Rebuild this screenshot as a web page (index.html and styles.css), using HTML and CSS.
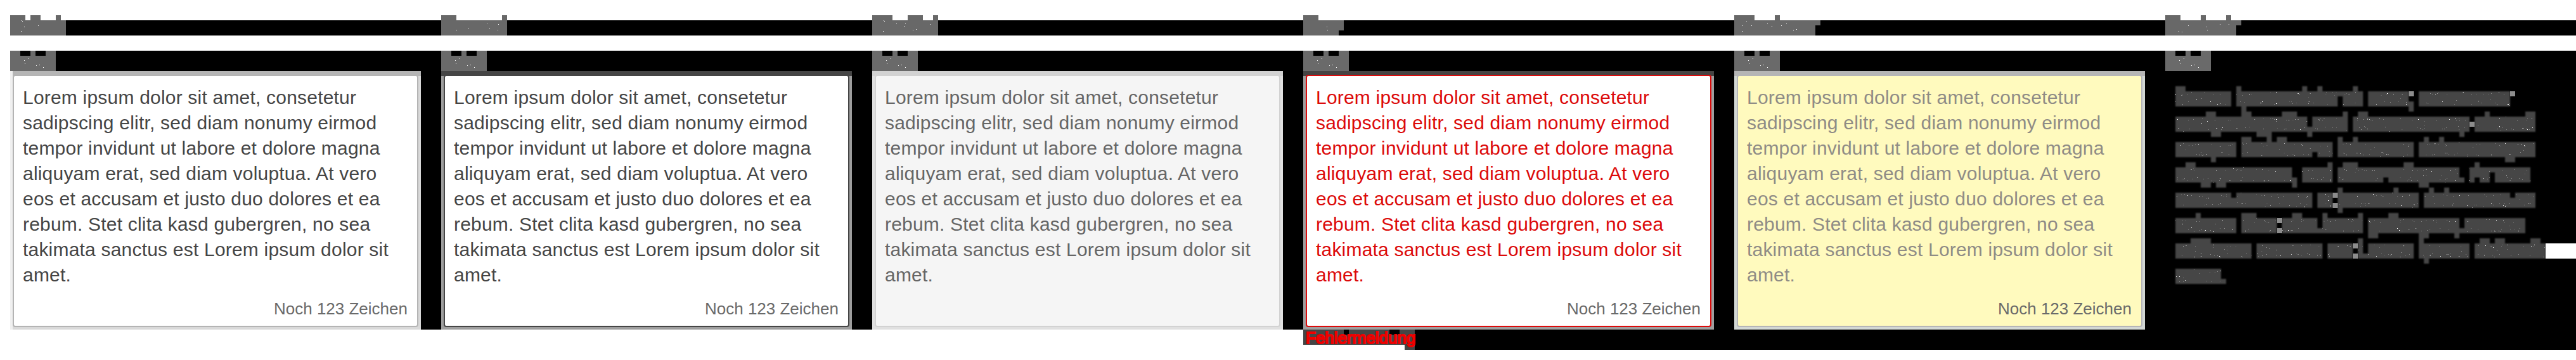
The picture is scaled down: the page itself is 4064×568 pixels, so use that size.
FILE: index.html
```
<!DOCTYPE html>
<html lang="de">
<head>
<meta charset="utf-8">
<title>Textarea</title>
<link rel="stylesheet" href="styles.css">
</head>
<body>
<main class="states">
  <section class="state">
    <svg class="title" viewBox="0 0 85 4" data-cells="0,0,3,1 4,0,2,1 9,0,1,1 0,1,11,3" data-dots="18,8 19,9 22,18 17,25 44,16"></svg>
    <div class="field">
      <svg class="label" viewBox="0 0 81 4"></svg>
      <div class="area default">
        <div class="box">
          <p class="text">Lorem ipsum dolor sit amet, consetetur<br>sadipscing elitr, sed diam nonumy eirmod<br>tempor invidunt ut labore et dolore magna<br>aliquyam erat, sed diam voluptua. At vero<br>eos et accusam et justo duo dolores et ea<br>rebum. Stet clita kasd gubergren, no sea<br>takimata sanctus est Lorem ipsum dolor sit<br>amet.</p>
          <p class="counter">Noch 123 Zeichen</p>
        </div>
      </div>
    </div>
  </section>
  <section class="state">
    <svg class="title" viewBox="0 0 85 4" data-cells="0,0,3,1 12,0,1,1 0,1,13,3" data-dots="24,23 43,21 72,12 76,21 90,14 89,23"></svg>
    <div class="field">
      <svg class="label" viewBox="0 0 81 4"></svg>
      <div class="area focus">
        <div class="box">
          <p class="text">Lorem ipsum dolor sit amet, consetetur<br>sadipscing elitr, sed diam nonumy eirmod<br>tempor invidunt ut labore et dolore magna<br>aliquyam erat, sed diam voluptua. At vero<br>eos et accusam et justo duo dolores et ea<br>rebum. Stet clita kasd gubergren, no sea<br>takimata sanctus est Lorem ipsum dolor sit<br>amet.</p>
          <p class="counter">Noch 123 Zeichen</p>
        </div>
      </div>
    </div>
  </section>
  <section class="state">
    <svg class="title" viewBox="0 0 85 4" data-cells="0,0,4,1 7,0,3,1 12,0,1,1 0,1,13,3" data-dots="18,8 19,9 17,25 38,12 52,12 50,17 64,23 69,22 91,14"></svg>
    <div class="field">
      <svg class="label" viewBox="0 0 81 4"></svg>
      <div class="area disabled">
        <div class="box">
          <p class="text">Lorem ipsum dolor sit amet, consetetur<br>sadipscing elitr, sed diam nonumy eirmod<br>tempor invidunt ut labore et dolore magna<br>aliquyam erat, sed diam voluptua. At vero<br>eos et accusam et justo duo dolores et ea<br>rebum. Stet clita kasd gubergren, no sea<br>takimata sanctus est Lorem ipsum dolor sit<br>amet.</p>
        </div>
      </div>
    </div>
  </section>
  <section class="state">
    <svg class="title" viewBox="0 0 85 4" data-cells="0,0,3,1 0,1,8,2 0,3,7,1" data-dots="37,18 38,23"></svg>
    <div class="field tall">
      <svg class="label" viewBox="0 0 81 4"></svg>
      <div class="area error">
        <div class="box">
          <p class="text">Lorem ipsum dolor sit amet, consetetur<br>sadipscing elitr, sed diam nonumy eirmod<br>tempor invidunt ut labore et dolore magna<br>aliquyam erat, sed diam voluptua. At vero<br>eos et accusam et justo duo dolores et ea<br>rebum. Stet clita kasd gubergren, no sea<br>takimata sanctus est Lorem ipsum dolor sit<br>amet.</p>
          <p class="counter">Noch 123 Zeichen</p>
        </div>
      </div>
      <p class="message">Fehlermeldung</p>
    </div>
  </section>
  <section class="state">
    <svg class="title" viewBox="0 0 85 4" data-cells="0,0,4,1 8,0,1,1 0,1,17,1 0,2,16,2" data-dots="19,10 13,16 27,16 13,25 52,12 59,17 74,16 82,12 93,23 98,22"></svg>
    <div class="field tall">
      <svg class="label" viewBox="0 0 81 4"></svg>
      <div class="area marked">
        <div class="box">
          <p class="text">Lorem ipsum dolor sit amet, consetetur<br>sadipscing elitr, sed diam nonumy eirmod<br>tempor invidunt ut labore et dolore magna<br>aliquyam erat, sed diam voluptua. At vero<br>eos et accusam et justo duo dolores et ea<br>rebum. Stet clita kasd gubergren, no sea<br>takimata sanctus est Lorem ipsum dolor sit<br>amet.</p>
          <p class="counter">Noch 123 Zeichen</p>
        </div>
      </div>
    </div>
  </section>
  <section class="state">
    <svg class="title" viewBox="0 0 85 4" data-cells="0,0,3,1 7,0,1,1 12,0,1,1 0,1,15,1 0,2,14,2" data-dots="36,16 21,25 26,26 65,18 66,23 86,14 100,14"></svg>
    <div class="field tall">
      <svg class="label" viewBox="0 0 81 4"></svg>
      <svg class="masked" viewBox="0 0 81 51"></svg>
    </div>
  </section>
</main>
<script src="blocks.js"></script>
</body>
</html>
```
FILE: styles.css
```
* { box-sizing: border-box; }
body {
  margin: 0;
  background: #fff;
  font-family: "Liberation Sans", Arial, sans-serif;
  overflow: hidden;
}
p { margin: 0; }
.states {
  display: grid;
  grid-template-columns: repeat(5, 680px) 648px;
  padding: 24px 0 0 16px;
}
.state { display: flex; flex-direction: column; gap: 24px; min-width: 0; }
.title {
  display: block;
  width: 680px;
  height: 32px;
  background: linear-gradient(#fff 8px, #000 8px);
  fill: #686868;
}
.title, .label, .masked { shape-rendering: crispEdges; }
.field { height: 440px; background: #000; }
.field.tall { height: 472px; }
.label { display: block; width: 648px; height: 32px; fill: #6a6a6a; }
.dot { fill: #fff; }
.area {
  width: 648px;
  height: 408px;
  padding: 6px 4px 4px;
  background: linear-gradient(var(--top) 8px, var(--side) 8px);
}
.box {
  height: 398px;
  padding: 14px 15px 0 14px;
  border: 2px solid var(--line);
  border-radius: 4px;
  background: var(--fill, #fff);
  display: flex;
  flex-direction: column;
  justify-content: space-between;
}
.text {
  color: var(--ink, #454545);
  font-size: 30px;
  line-height: 40px;
  letter-spacing: 0.2px;
  white-space: nowrap;
}
.counter {
  padding-bottom: 11px;
  color: #6a6a6a;
  font-size: 26px;
  line-height: 32px;
  text-align: right;
}
.default { --top: #b5b5b5; --side: #d9d9d9; --line: #b4b4b4; border-left: 4px solid #f0f0f0; padding-left: 0; }
.focus { --top: #454545; --side: #9e9e9e; --line: #454545; }
.disabled { --top: #d2d2d2; --side: #e0e0e0; --line: #d2d2d2; --fill: #f5f5f5; --ink: #666; }
.error { --top: #454342; --side: #a09e9e; --line: #dc0a0a; --ink: #dc0a0a; }
.marked { --top: #b5b5b5; --side: #d2d7d4; --line: #b5b5b8; --fill: #fffabe; --ink: #8f8c86; }
.message {
  width: 176px;
  height: 32px;
  padding-left: 4px;
  background:
    linear-gradient(#000, #000) 64px 0 / 8px 8px no-repeat,
    linear-gradient(#000, #000) 136px 0 / 16px 8px no-repeat,
    linear-gradient(90deg, #fff 160px, #454545 160px) 0 24px / 176px 8px no-repeat,
    #454545;
  color: #f00000;
  -webkit-text-stroke: 2px #f00000;
  font-size: 26px;
  line-height: 26px;
}
.masked { display: block; width: 648px; height: 408px; fill: #464646; }
.masked .soft { filter: blur(0.14px); }
.masked .pale { fill: #8c8c8c; }
.masked .faint { fill: #8a8a8a; }
```
FILE: blocks.js
```
// Blocks sit on a grid of 8px cells; rectangles are "x,y,w,h".
const rect = s => {
  const [x, y, w, h] = s.split(",");
  return `<rect x="${x}" y="${y}" width="${w}" height="${h}"/>`;
};
const dots = s => s.split(" ").map(p => {
  const [x, y] = p.split(",");
  return `<rect class="dot" x="${x / 8}" y="${y / 8}" width=".125" height=".125"/>`;
}).join("");

document.querySelectorAll(".title").forEach(el => {
  el.innerHTML = el.dataset.cells.split(" ").map(rect).join("") + dots(el.dataset.dots);
});
document.querySelectorAll(".label").forEach(el => {
  el.innerHTML = ["0,0,2,4", "4,0,1,4", "7,0,2,4", "2,1,2,3", "5,1,2,3"].map(rect).join("") +
    dots("29,12 22,15 23,20 46,22 41,23 52,26");
});

// Per line: body runs, ascenders, descenders, extra cells (x,row,w,h).
const lines = [
  ["2-13 14-34 35-39 40-48 50-68", "2-4 14-15 27-28 30-31 37-38", "15-16 48-49", "34,1,1,1 48,3,1,1"],
  ["2-28 29-36 37-60 61-73", "8-10 15-17 23-26 35-36 38-40 63-64 71-73", "9-11 18-21 28-29 58-59", "28,3,1,1"],
  ["2-14 15-29 30-33 34-49 50-73", "15-17 20-21 22-24 34-35 37-38 51-52 54-55", "9-10 67-69", "29,1,1,2"],
  ["2-25 27-33 34-43 44-58 60-61 62-64 65-72", "4-6 32-33 35-38 47-49 61-62", "7-9 10-12 25-26 50-52", "25,3,1,1 58,3,1,1 43,1,1,2 61,1,1,2 64,1,1,1"],
  ["2-13 14-29 30-33 34-50 51-68 69-73", "34-35 45-46 52-53 55-56", "34-35", "13,2,1,2 68,2,1,2"],
  ["2-14 15-22 23-30 31-39 40-58 59-71", "6-7 15-18 25-27 31-32 38-39 44-46", "40-42 50-52 57-58", "30,3,1,1 58,3,1,1"],
  ["2-17 18-31 32-37 38-39 40-49 50-60 61-75", "5-9 38-39 50-51 62-64 65-67 72-74", "51-52", "39,3,1,1"],
  ["2-11", "", "", "11,3,1,1"]
];
const runs = (s, y, h) => s ? s.split(" ").map(r => {
  const [a, b] = r.split("-");
  return rect(`${a},${y},${b - a},${h}`);
}).join("") : "";

let seed = 17;
const next = () => (seed = (seed * 16807) % 2147483647) / 2147483647;
let soft = "", specks = "";
lines.forEach(([body, up, down, extra], i) => {
  const top = 3 + i * 5;
  soft += runs(body, top + 1, 3) + runs(up, top, 1) + runs(down, top + 4, 1);
  if (extra) {
    soft += extra.split(" ").map(c => {
      const [x, y, w, h] = c.split(",").map(Number);
      return rect([x, top + y, w, h].join(","));
    }).join("");
  }
  body.split(" ").forEach(r => {
    const [a, b] = r.split("-").map(Number);
    for (let n = 0; n < (b - a) * 1.7; n++) {
      const x = Math.floor((a + next() * (b - a)) * 8) / 8;
      const edge = next();
      const y = top + 1 + Math.floor((edge < .4 ? .3 + next() * .5 : edge < .8 ? 2 + next() * .7 : next() * 3) * 8) / 8;
      const white = n % 4 === 0;
      specks += `<rect class="${white ? "dot" : "faint"}" x="${x}" y="${y}" width=".125" height=".125"/>`;
    }
  });
});
const pale = ["48,4,1,1", "68,4,1,1", "60,10,1,1", "33,24,1,1", "33,26,1,1", "22,29,1,1", "22,31,1,1", "37,34,1,1", "37,36,1,1"];
document.querySelector(".masked").innerHTML =
  `<g class="soft">${soft}</g><g class="pale">${pale.map(rect).join("")}</g>${specks}` +
  `<rect class="dot" x="75" y="34" width="6" height="3"/>`;
```
